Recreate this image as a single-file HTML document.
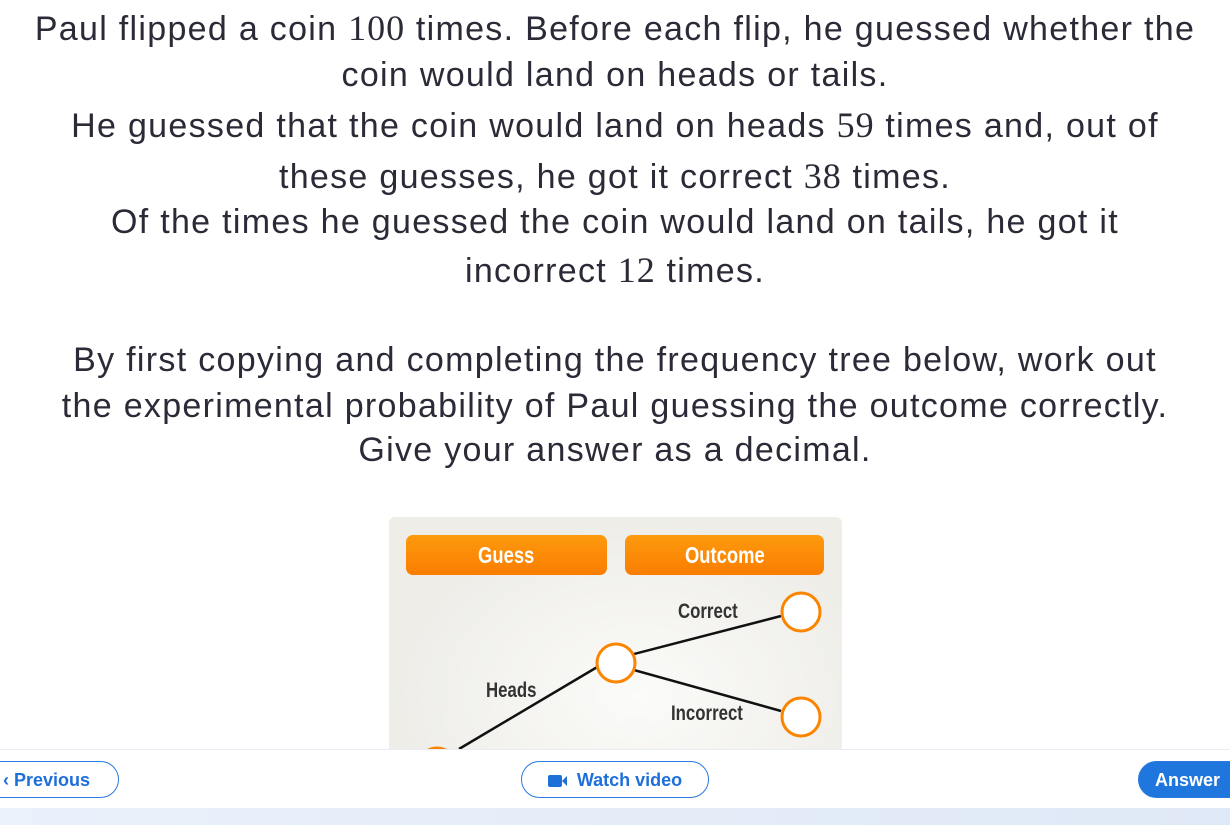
<!DOCTYPE html>
<html><head><meta charset="utf-8"><style>
body{margin:0;width:1230px;height:825px;overflow:hidden;background:#fff;font-family:"Liberation Sans",sans-serif;position:relative}
.l{position:absolute;left:0;width:1230px;text-align:center;font-size:34px;letter-spacing:1.3px;word-spacing:0px;color:#2b2b38;line-height:40px;white-space:nowrap}
.m{font-family:"Liberation Serif",serif;font-size:36px;letter-spacing:1px}
.panel{position:absolute;left:389px;top:517px;width:453px;height:240px;border-radius:6px;background:radial-gradient(ellipse at 55% 75%,#fbfbf9 0%,#eeede8 70%)}
.hd{position:absolute;top:18px;height:40px;border-radius:7px;background:linear-gradient(#fd9a0e,#fa7d00);color:#fff;text-align:center;line-height:40px}
.hd span,.t{display:inline-block;transform:scaleX(0.8);font-weight:bold;font-size:23px}
.t{position:absolute;font-size:21px;color:#333;transform-origin:left center}
.foot{position:absolute;left:0;top:749px;width:1230px;height:59px;background:#fff;border-top:1px solid #e8edf5}
.bot{position:absolute;left:0;top:808px;width:1230px;height:17px;background:linear-gradient(90deg,#eaf1fb,#dfe8f6)}
.btn{position:absolute;top:11px;height:37px;border:1px solid #2a7ae0;border-radius:19px;color:#1f6fd9;font-weight:bold;font-size:18px;line-height:37px;box-sizing:border-box}
</style></head><body>
<div class="l" style="top:8px">Paul flipped a coin <span class="m">100</span> times. Before each flip, he guessed whether the</div>
<div class="l" style="top:55px">coin would land on heads or tails.</div>
<div class="l" style="top:105px">He guessed that the coin would land on heads <span class="m">59</span> times and, out of</div>
<div class="l" style="top:156px">these guesses, he got it correct <span class="m">38</span> times.</div>
<div class="l" style="top:202px">Of the times he guessed the coin would land on tails, he got it</div>
<div class="l" style="top:250px">incorrect <span class="m">12</span> times.</div>
<div class="l" style="top:340px">By first copying and completing the frequency tree below, work out</div>
<div class="l" style="top:386px">the experimental probability of Paul guessing the outcome correctly.</div>
<div class="l" style="top:430px">Give your answer as a decimal.</div>
<div class="panel">
<div class="hd" style="left:17px;width:201px"><span>Guess</span></div>
<div class="hd" style="left:236px;width:199px"><span>Outcome</span></div>
<svg width="453" height="240" style="position:absolute;left:0;top:0">
<g stroke="#111" stroke-width="2.5" fill="none">
<line x1="70" y1="232" x2="215" y2="146"/>
<line x1="245" y1="137" x2="392" y2="99"/>
<line x1="245" y1="153" x2="392" y2="194"/>
</g>
<g fill="#fff" stroke="#fb8500" stroke-width="3">
<circle cx="227" cy="146" r="19"/>
<circle cx="412" cy="95" r="19"/>
<circle cx="412" cy="200" r="19"/>
<circle cx="48" cy="250" r="19"/>
</g>
</svg>
<div class="t" style="left:289px;top:83px">Correct</div>
<div class="t" style="left:97px;top:162px">Heads</div>
<div class="t" style="left:282px;top:185px">Incorrect</div>
</div>
<div class="foot">
<div class="btn" style="left:-20px;width:139px;padding-left:22px">&#x2039; Previous</div>
<div class="btn" style="left:521px;width:188px;text-align:center"><span style="display:inline-block;width:14px;height:12px;background:#1f6fd9;border-radius:2px;vertical-align:-1px"></span><span style="display:inline-block;width:0;height:0;border-top:5px solid transparent;border-bottom:5px solid transparent;border-right:5px solid #1f6fd9;vertical-align:0px;margin-right:10px"></span>Watch video</div>
<div class="btn" style="left:1138px;width:120px;background:#1f77de;color:#fff;padding-left:16px">Answer</div>
</div>
<div class="bot"></div>
</body></html>
